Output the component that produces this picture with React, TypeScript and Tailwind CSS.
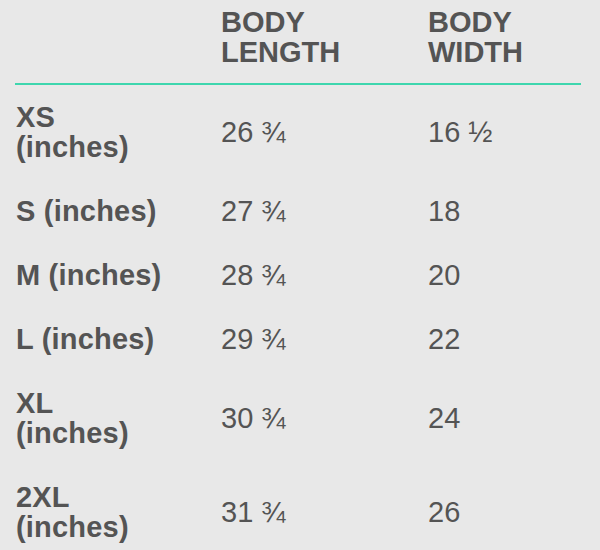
const rows = [
  { size: 'XS', label: ['XS', '(inches)'], length: '26 ¾', width: '16 ½' },
  { size: 'S', label: ['S (inches)'], length: '27 ¾', width: '18' },
  { size: 'M', label: ['M (inches)'], length: '28 ¾', width: '20' },
  { size: 'L', label: ['L (inches)'], length: '29 ¾', width: '22' },
  { size: 'XL', label: ['XL', '(inches)'], length: '30 ¾', width: '24' },
  { size: '2XL', label: ['2XL', '(inches)'], length: '31 ¾', width: '26' },
];

export default function App() {
  return (
    <div className="h-[550px] w-[600px] overflow-hidden bg-[#e8e8e8] pl-[15px] pr-[19px] font-['Liberation_Sans',Arial,sans-serif] text-[29px] leading-[30px] text-[#545454]">
      <div className="grid grid-cols-[206px_207px_1fr] border-b-2 border-[#3ed6ae] pt-[7px] pb-[16px] font-bold">
        <div />
        <div>BODY<br />LENGTH</div>
        <div>BODY<br />WIDTH</div>
      </div>

      {rows.map((r) => (
        <div key={r.size} className="grid grid-cols-[206px_207px_1fr] items-center py-[17px]">
          <div className="pl-px font-bold tracking-[0.2px]">
            {r.label.map((l) => (
              <div key={l}>{l}</div>
            ))}
          </div>
          <div>{r.length}</div>
          <div>{r.width}</div>
        </div>
      ))}
    </div>
  );
}
